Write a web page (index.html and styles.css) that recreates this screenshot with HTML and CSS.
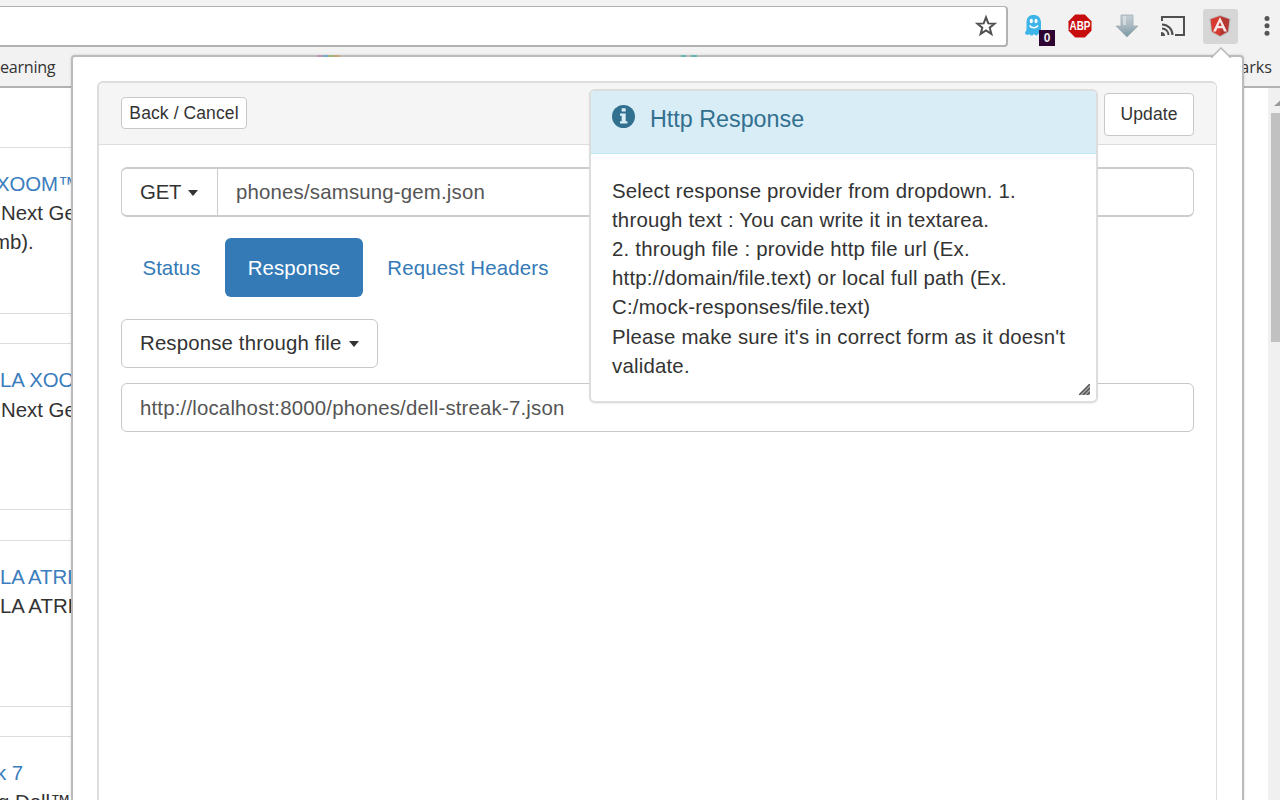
FILE: index.html
```html
<!DOCTYPE html>
<html lang="en">
<head>
<meta charset="utf-8">
<title>Http Response</title>
<link rel="stylesheet" href="styles.css">
</head>
<body>
<div class="browser">
  <header class="toolbar">
    <div class="address">
      <svg width="24" height="24" viewBox="0 0 24 24" fill="none" stroke="#505050" stroke-width="2"><path d="M12 3.400l2.300 6 6.300.3-4.900 4 1.700 6.200-5.400-3.500-5.400 3.500 1.700-6.200-4.900-4 6.300-.3z"/></svg>
    </div>
    <div class="extensions">
      <div class="ext ghost">
        <svg width="20" height="24" viewBox="0 0 20 24"><path fill="#3db5e8" d="M2.500 9C2.500 3.500 5 1 9.500 1S17 3.500 17 9v6c0 3 1.500 5 0 5.500-1 .3-2-.5-2.500-1-1 2.500-3 2.500-4.500.5-1.500 2-3.500 2-4.500 0-1.500 1.500-4.500 1-4.500-1.500 1.500-1.500 1.500-3 1.500-5z"/><ellipse cx="7.300" cy="7" rx="1.600" ry="2.300" fill="#fff"/><ellipse cx="12" cy="7" rx="1.600" ry="2.300" fill="#fff"/><path d="M5.500 11.500c2 3 6.500 3 8.500 0" fill="none" stroke="#fff" stroke-width="1.500"/></svg>
        <span class="count">0</span>
      </div>
      <div class="ext abp">
        <svg width="24" height="24" viewBox="0 0 24 24"><path fill="#c70d0d" d="M7.200.5h9.600l6.700 6.700v9.600l-6.700 6.700H7.200L.5 16.800V7.200z"/><text x="12" y="16.300" text-anchor="middle" textLength="21" lengthAdjust="spacingAndGlyphs" class="abp-text">ABP</text></svg>
      </div>
      <div class="ext download">
        <svg width="24" height="24" viewBox="0 0 24 24"><defs><linearGradient id="steel" x2="0" y2="1"><stop stop-color="#c5cfd4"/><stop offset=".5" stop-color="#a9b8c0"/><stop offset="1" stop-color="#7796a5"/></linearGradient></defs><path d="M6 1h12v11h5L12 23 1 12h5z" fill="url(#steel)" stroke="#a0adb2" stroke-width=".8"/><path d="M8 2h3v9H8z" fill="#dfe5e8" opacity=".7"/></svg>
      </div>
      <div class="ext cast">
        <svg width="24" height="20" viewBox="0 0 24 20" fill="none" stroke="#505050" stroke-width="2"><path d="M1 5V1h22v18h-9M1 8.500A10.500 10.500 0 0 1 11.500 19M1 12.500A6.500 6.500 0 0 1 7.500 19"/><path fill="#505050" stroke="none" d="M0 16a4 4 0 0 1 4 4H0z"/></svg>
      </div>
      <div class="ext angular">
        <svg width="22" height="22" viewBox="0 0 22 22"><path fill="#b9b9b9" d="M11 0l10.500 3.700-1.600 13.500L11 22l-8.900-4.800L.5 3.700z"/><path fill="#d63a31" d="M11 1L1.600 4.300l1.400 12.200 8 4.500z"/><path fill="#b63731" d="M11 1l9.400 3.300-1.400 12.200-8 4.500z"/><path fill="#f5e8e7" fill-rule="evenodd" d="M11 2L4 16.500h3l1.300-3.200h5.400l1.300 3.200h3zM9.300 11L11 7l1.700 4z"/></svg>
      </div>
      <svg class="kebab" width="6" height="20" viewBox="0 0 6 20" fill="#555"><circle cx="3" cy="2.500" r="2.500"/><circle cx="3" cy="9.800" r="2.500"/><circle cx="3" cy="17.200" r="2.500"/></svg>
    </div>
  </header>
  <div class="bookmarks"><span>earning</span><span class="end">arks</span></div>
  <main class="page">
    <div class="phones">
      <section class="phone"><a class="p1">XOOM™</a><p class="next">Next Ge</p><p class="mb">mb).</p></section>
      <section class="phone"><a>LA XOO</a><p class="next">Next Ge</p></section>
      <section class="phone"><a>LA ATRI</a><p>LA ATRI</p></section>
      <section class="phone last"><a class="streak">k 7</a><p class="dell">g Dell™</p></section>
    </div>
    <div class="scrollbar"><i class="up"></i><i class="thumb"></i></div>
  </main>
</div>

<div class="popup">
  <svg class="notch" width="20" height="11" viewBox="0 0 20 11"><path d="M0 11L10 1l10 10" fill="#fff" stroke="#b8b8b8" stroke-width="1.500"/></svg>
  <i class="favicon multi"></i><i class="favicon teal"></i>
  <div class="panel">
    <div class="panel-head">
      <button class="btn back"><span>Back / Cancel</span></button>
      <button class="btn update"><span>Update</span></button>
    </div>
    <div class="panel-body">
      <div class="group">
        <button class="method"><span>GET</span><i class="caret"></i></button>
        <div class="value"><span class="t-url">phones/samsung-gem.json</span></div>
      </div>
      <nav class="tabs">
        <a class="tab status"><span>Status</span></a>
        <a class="tab active"><span>Response</span></a>
        <a class="tab headers"><span>Request Headers</span></a>
      </nav>
      <button class="provider"><span>Response through file</span><i class="caret"></i></button>
      <div class="file"><span>http://localhost:8000/phones/dell-streak-7.json</span></div>
    </div>
  </div>
  <aside class="help">
    <h3><svg width="23" height="23" viewBox="0 0 23 23"><circle cx="11.500" cy="11.500" r="11.500" fill="#31708f"/><path fill="#d9edf7" d="M9.700 3.200h4v3.200h-4zM8 8.500h5.700v7.700h1.700v2.300H8v-2.300h1.700v-5.400H8z"/></svg><span>Http Response</span></h3>
    <div class="help-body">
      <div>Select response provider from dropdown. 1.</div>
      <div>through text : You can write it in textarea.</div>
      <div>2. through file : provide http file url (Ex.</div>
      <div>http://domain/file.text) or local full path (Ex.</div>
      <div>C:/mock-responses/file.text)</div>
      <div>Please make sure it's in correct form as it doesn't</div>
      <div>validate.</div>
    </div>
    <svg class="grip" width="11" height="11" viewBox="0 0 11 11"><path d="M0 11L11 0v11z" fill="#aaa"/><path d="M0 11L11 0M4 11l7-7M8 11l3-3" stroke="#555" stroke-width="1.500"/></svg>
  </aside>
</div>
</body>
</html>
```
FILE: styles.css
```css
* { box-sizing: border-box; }
body { margin: 0; width: 1280px; height: 800px; overflow: hidden; position: relative; background: #fff; color: #333; font: 20.4px/29.2px "Liberation Sans", Arial, sans-serif; }
button { font: inherit; color: inherit; margin: 0; }
p, h3 { margin: 0; font-weight: 400; }
svg { display: block; }
span, a, p, .help-body div { white-space: nowrap; }

.browser { height: 800px; display: flex; flex-direction: column; overflow: hidden; }
.toolbar { height: 48px; flex: none; background: #f2f2f2; display: flex; align-items: flex-start; padding-top: 6px; }
.address { width: 1008px; height: 41px; flex: none; border: 2px solid #b2b2b2; border-top: 1px solid #b2b2b2; border-left: 0; border-radius: 0 4px 4px 0; background: #fff; display: flex; align-items: center; justify-content: flex-end; padding-right: 8px; }
.extensions { display: flex; align-items: center; height: 40px; }
.ghost { position: relative; margin-left: 16px; width: 20px; }
.count { position: absolute; left: 15px; top: 16px; width: 16px; height: 16px; background: #2e0432; color: #eee; font: bold 12px/16px "Liberation Sans", sans-serif; text-align: center; }
.abp { margin-left: 24px; }
.abp-text { fill: #fff; font: bold 12.5px "Liberation Sans", sans-serif; }
.download { margin-left: 23px; }
.cast { margin-left: 22px; }
.angular { width: 35px; height: 35px; margin-left: 18px; border-radius: 3px; background: #d6d6d6; display: flex; align-items: center; justify-content: center; }
.angular svg { margin-left: -1px; }
.kebab { margin-left: 26px; }
.bookmarks { height: 40px; flex: none; background: #f2f2f2; border-bottom: 2px solid #b2b2b2; display: flex; justify-content: space-between; padding: 0 8px 0 0; font: 16.2px/39px "Open Sans", "Noto Sans", sans-serif; letter-spacing: -.3px; }
.bookmarks .end { letter-spacing: 0; }
.page { flex: 1; min-height: 0; display: flex; justify-content: space-between; }
.phones { width: 80px; overflow: hidden; padding-top: 59px; }
.phone { height: 167px; margin-bottom: 29.300px; border: solid #ddd; border-width: 1px 0; padding-top: 22px; }
.phone.last { height: 64px; margin-bottom: 0; border-bottom: 0; overflow: hidden; }
.phone a { display: block; color: #3b7dbd; letter-spacing: -.1px; }
.p1 { margin-left: -4px; }
.next { margin-left: 1px; }
.mb { margin-left: -7px; }
.streak { margin-left: -4px; }
.dell { margin-left: -2px; }
.scrollbar { width: 12px; background: #f0f0f0; overflow: hidden; padding: 12px 0 0 3px; }
.up { display: block; width: 0; border: 7px solid transparent; border-top: 0; border-bottom: 6px solid #999; margin-left: 3px; }
.thumb { display: block; width: 12px; height: 229px; margin-top: 7px; background: #c1c1c1; }

.popup { position: absolute; left: 71px; top: 55px; width: 1173px; height: 745px; border: 2px solid #bbb; border-bottom: 0; border-radius: 4px 4px 0 0; background: #fff; padding: 25px 25px 0 24px; box-shadow: 0 0 3px #0002; }
.notch { position: absolute; left: 1138px; top: -10px; }
.favicon { position: absolute; top: -2px; height: 2px; }
.multi { left: 244px; width: 23px; background: linear-gradient(90deg, #b998b5 25%, #77aacb 25% 50%, #9db57b 50% 75%, #c7a678 75%); }
.teal { left: 608px; width: 16px; background: linear-gradient(90deg, #6bb5b2 30%, #bbb 30% 65%, #6bb5b2 65%); }
.panel { height: 719px; border: 2px solid #ddd; border-right-width: 1px; border-bottom: 0; border-radius: 6px 6px 0 0; margin-top: -1px; }
.panel-head { height: 62px; background: #f5f5f5; border-bottom: 1px solid #ddd; border-radius: 5px 5px 0 0; display: flex; justify-content: space-between; padding: 10px 22px 0 22px; }
.btn { border: 1px solid #c8c8c8; border-radius: 4px; background: #fff; padding: 0; display: flex; align-items: center; justify-content: center; font-size: 17.5px; letter-spacing: .1px; }
.btn span { padding-top: 1px; }
.back { width: 126px; height: 32px; margin-top: 4px; }
.update { width: 90px; height: 43px; }
.panel-body { padding: 22px 22px 0 22px; }
.group { height: 50px; display: flex; border: 2px solid #ccc; border-width: 2px 1px; border-radius: 6px; }
.method { width: 96px; border: 0; border-right: 1px solid #ccc; background: none; padding: 1px 0 0 18px; display: flex; align-items: center; }
.method span { letter-spacing: -.2px; }
.caret { border: 5.500px solid transparent; border-top: 6px solid #333; border-bottom: 0; margin-left: 7px; }
.value, .file { color: #555; display: flex; align-items: center; letter-spacing: .18px; }
.value { padding: 1px 0 0 18px; }
.tabs { display: flex; margin-top: 21px; gap: 3px; }
.tab { height: 59px; display: flex; align-items: center; justify-content: center; color: #337ab7; border-radius: 6px; padding-top: 2px; }
.status { width: 101px; }
.tab.active { width: 138px; background: #337ab7; color: #fff; letter-spacing: .1px; }
.headers { width: 204px; letter-spacing: .18px; }
.provider { margin-top: 22px; width: 257px; height: 49px; background: #fff; border: 1px solid #c8c8c8; border-radius: 6px; padding: 1px 0 0 18px; display: flex; align-items: center; letter-spacing: .15px; }
.file { margin-top: 15px; height: 49px; border: 1px solid #c8c8c8; border-radius: 6px; padding: 2px 0 0 18px; }
.help { position: absolute; left: 516px; top: 32px; width: 509px; height: 314px; background: #fff; border: 2px solid #ddd; border-radius: 6px; box-shadow: 0 1px 2px #0001; }
.help h3 { height: 63px; display: flex; align-items: flex-start; padding: 13px 0 0 21px; gap: 15px; color: #31708f; background: #d9edf7; border-bottom: 1px solid #bce8f1; border-radius: 4px 4px 0 0; font-size: 23.3px; }
.help h3 svg { margin-top: 1px; }
.help h3 span { line-height: 30px; }
.help-body { padding: 22.500px 0 0 21px; letter-spacing: .2px; }
.grip { position: absolute; right: 6px; bottom: 6px; }
```
